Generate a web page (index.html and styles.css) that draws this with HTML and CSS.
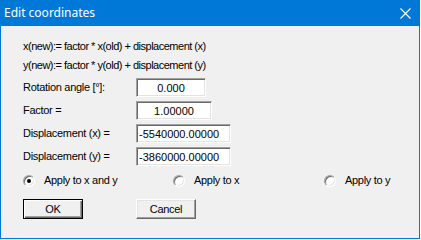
FILE: index.html
```html
<!DOCTYPE html>
<html lang="en">
<head>
    <meta charset="UTF-8">
    <title>Edit coordinates</title>
    <link rel="stylesheet" href="styles.css">
</head>
<body>
<div class="window">
    <div class="titlebar">
        <span class="title">Edit coordinates</span>
        <svg class="close" width="11" height="11" viewBox="0 0 11 11">
            <path d="M0.5 0.5 L10.5 10.5 M10.5 0.5 L0.5 10.5" stroke="#fff" stroke-width="1.1" fill="none"/>
        </svg>
    </div>
    <div class="content">
        <p class="formula">x(new):= factor * x(old) + displacement (x)</p>
        <p class="formula">y(new):= factor * y(old) + displacement (y)</p>
        <div class="fields">
            <label class="label">Rotation angle [°]:</label>
            <input class="box box-rot" value="0.000" readonly>
            <label class="label">Factor =</label>
            <input class="box box-factor" value="1.00000" readonly>
            <label class="label">Displacement (x) =</label>
            <input class="box box-disp" value="-5540000.00000" readonly>
            <label class="label">Displacement (y) =</label>
            <input class="box box-disp" value="-3860000.00000" readonly>
        </div>
        <div class="options">
            <label class="option"><span class="radio checked"></span>Apply to x and y</label>
            <label class="option"><span class="radio"></span>Apply to x</label>
            <label class="option"><span class="radio"></span>Apply to y</label>
        </div>
        <div class="buttons">
            <button class="btn btn-default">OK</button>
            <button class="btn">Cancel</button>
        </div>
    </div>
</div>
</body>
</html>
```
FILE: styles.css
```css
*{
    margin:0;
    padding:0;
    box-sizing:border-box;
}
body{
    background:#fff;
    font-family:"Liberation Sans", Arial, sans-serif;
    font-size:11px;
    color:#000;
}
.window{
    width:420px;
    height:239px;
    background:#f0f0f0;
    border:1px solid #0078d7;
    border-top:none;
}
.titlebar{
    height:26px;
    background:#0078d7;
    display:flex;
    align-items:center;
    justify-content:space-between;
    padding:0 8px 0 3px;
}
.title{
    color:#fff;
    font-family:"Noto Sans", "Open Sans", sans-serif;
    font-size:12px;
    line-height:16px;
}
.close{
    display:block;
}
.content{
    padding:14px 0 0 22px;
}
.formula{
    line-height:13px;
    letter-spacing:-0.5px;
    margin-bottom:6px;
}
.fields{
    margin-top:3px;
    display:grid;
    grid-template-columns:113px auto;
    row-gap:4px;
    align-items:center;
    justify-items:start;
}
.label{
    letter-spacing:-0.3px;
    line-height:13px;
}
.box{
    height:19px;
    border:1px solid;
    border-color:#a0a0a0 #fff #fff #a0a0a0;
    box-shadow:inset 1px 1px #696969, inset -1px -1px #e3e3e3;
    background:#fff;
    font-family:inherit;
    font-size:11px;
    color:#000;
    text-align:center;
    outline:none;
}
.box-rot{
    width:70px;
}
.box-factor{
    width:76px;
}
.box-disp{
    width:95px;
    text-align:left;
    padding-left:2px;
}
.options{
    margin-top:8px;
    display:grid;
    grid-template-columns:150px 151px auto;
    height:13px;
}
.option{
    display:flex;
    align-items:center;
    gap:9px;
    letter-spacing:-0.3px;
    line-height:13px;
}
.radio{
    width:12px;
    height:12px;
    border-radius:50%;
    border:1px solid;
    border-color:#a0a0a0 #fff #fff #a0a0a0;
    box-shadow:inset 1px 1px #696969, inset -1px -1px #e3e3e3;
    background:#fff;
    display:flex;
    align-items:center;
    justify-content:center;
}
.radio.checked::after{
    content:"";
    width:4px;
    height:4px;
    border-radius:50%;
    background:#000;
}
.buttons{
    margin-top:12px;
    display:flex;
    gap:53px;
}
.btn{
    width:60px;
    height:20px;
    background:#f0f0f0;
    border:1px solid;
    border-color:#fff #696969 #696969 #fff;
    box-shadow:inset -1px -1px #a0a0a0, inset 1px 1px #e3e3e3;
    font-family:inherit;
    font-size:11px;
    letter-spacing:-0.3px;
    color:#000;
}
.btn-default{
    border-color:#000;
    box-shadow:inset 1px 1px #fff, inset -1px -1px #696969, inset -2px -2px #a0a0a0;
}
```
